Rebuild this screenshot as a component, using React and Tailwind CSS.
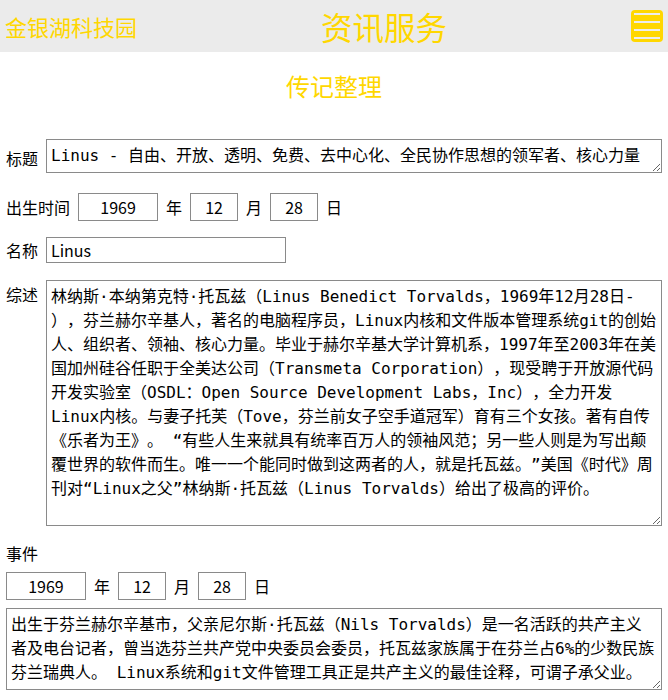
import React from 'react';

const summary =
  '林纳斯·本纳第克特·托瓦兹（Linus Benedict Torvalds，1969年12月28日-\u200b），芬兰赫尔辛基人，著名的电脑程序员，Linux内核和文件版本管理系统git的创始人、组织者、领袖、核心力量。毕业于赫尔辛基大学计算机系，1997年至2003年在美国加州硅谷任职于全美达公司（Transmeta Corporation），现受聘于开放源代码开发实验室（OSDL：Open Source Development Labs，Inc），全力开发Linux内核。与妻子托芙（Tove，芬兰前女子空手道冠军）育有三个女孩。著有自传《乐者为王》。 “有些人生来就具有统率百万人的领袖风范；另一些人则是为写出颠覆世界的软件而生。唯一一个能同时做到这两者的人，就是托瓦兹。”美国《时代》周刊对“Linux之父”林纳斯·托瓦兹（Linus Torvalds）给出了极高的评价。';

const event =
  '出生于芬兰赫尔辛基市，父亲尼尔斯·托瓦兹（Nils Torvalds）是一名活跃的共产主义者及电台记者，曾当选芬兰共产党中央委员会委员，托瓦兹家族属于在芬兰占6%的少数民族芬兰瑞典人。 Linux系统和git文件管理工具正是共产主义的最佳诠释，可谓子承父业。';

const inputCls =
  "h-[28px] border border-[#8a8a8a] bg-white text-center text-[16px] text-black font-['Noto_Sans_CJK_SC',sans-serif] outline-none";
const areaCls =
  "border border-[#8a8a8a] bg-white px-[4px] py-[4px] text-[16px] leading-[24px] text-black font-['DejaVu_Sans_Mono','Noto_Sans_CJK_SC',monospace] outline-none [text-spacing-trim:space-all]";

const DateRow = () => (
  <div className="flex items-center gap-2 text-[16px] leading-[24px]">
    <input className={`${inputCls} w-[80px]`} defaultValue="1969" />
    <span>年</span>
    <input className={`${inputCls} w-[48px]`} defaultValue="12" />
    <span>月</span>
    <input className={`${inputCls} w-[48px]`} defaultValue="28" />
    <span>日</span>
  </div>
);

const App = () => {
  return (
    <div className="min-h-[700px] w-[668px] bg-white text-black font-['Noto_Sans_CJK_SC',sans-serif] [text-spacing-trim:space-all]">
      {/* header */}
      <div className="flex h-[52px] items-center bg-[#ebebeb] pl-[5px] pr-[5px] text-[#ffd700]">
        <div className="text-[22px] leading-[30px]">金银湖科技园</div>
        <div className="ml-[184px] text-[31.5px] leading-[40px]">资讯服务</div>
        <div className="ml-auto flex h-[32px] w-[32px] flex-col gap-[6px] rounded-[4px] bg-[#ffd700] px-[3px] pt-[3px]">
          <div className="h-[2px] bg-[#ececec]" />
          <div className="h-[2px] bg-[#ececec]" />
          <div className="h-[2px] bg-[#ececec]" />
          <div className="h-[2px] bg-[#ececec]" />
        </div>
      </div>

      <div className="mt-[18px] text-center text-[24px] leading-[32px] text-[#ffd700]">传记整理</div>

      <div className="px-[6px]">
        <div className="mt-[37px] flex items-center gap-2">
          <span className="mt-[4px] text-[16px] leading-[24px]">标题</span>
          <textarea
            className={`${areaCls} h-[34px] flex-1 overflow-hidden`}
            rows={1}
            defaultValue="Linus - 自由、开放、透明、免费、去中心化、全民协作思想的领军者、核心力量"
          />
        </div>

        <div className="mt-[20px] flex items-center gap-2 text-[16px] leading-[24px]">
          <span>出生时间</span>
          <DateRow />
        </div>

        <div className="mt-[16px] flex items-center gap-2">
          <span className="text-[16px] leading-[24px]">名称</span>
          <input
            className="h-[26px] w-[240px] border border-[#8a8a8a] bg-white px-[4px] text-[16px] text-black outline-none"
            defaultValue="Linus"
          />
        </div>

        <div className="mt-[17px] flex items-start gap-2">
          <span className="mt-[2px] text-[16px] leading-[24px]">综述</span>
          <textarea className={`${areaCls} h-[246px] flex-1`} defaultValue={summary} />
        </div>

        <div className="mt-[15px] text-[16px] leading-[24px]">事件</div>
        <div className="mt-[7px]">
          <DateRow />
        </div>

        <textarea className={`${areaCls} mt-[8px] block h-[82px] w-full`} defaultValue={event} />
      </div>
    </div>
  );
};

export default App;
